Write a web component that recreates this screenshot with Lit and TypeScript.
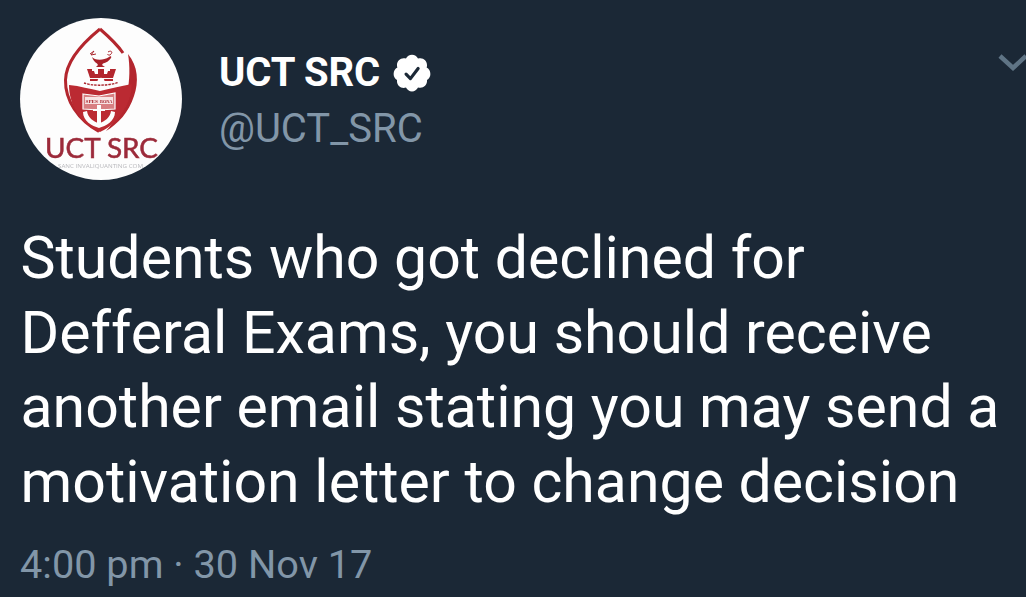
import { LitElement, html, css } from "lit";
import { customElement } from "lit/decorators.js";

@customElement("app-root")
export class AppRoot extends LitElement {
  static styles = css`
    :host {
      display: block;
      width: 1026px;
      height: 597px;
      overflow: hidden;
      background: #1b2836;
      font-family: Roboto, "Liberation Sans", sans-serif;
      color: #fff;
    }
    .tweet {
      display: flex;
      flex-direction: column;
      padding: 18px 0 0 20px;
    }
    .head {
      display: flex;
      align-items: flex-start;
    }
    .avatar {
      width: 162px;
      height: 162px;
      flex: none;
      display: block;
    }
    .who {
      margin-left: 37px;
      padding-top: 30px;
      flex: 1;
    }
    .name-row {
      display: flex;
      align-items: center;
      height: 50px;
    }
    .name {
      font-size: 40px;
      font-weight: 700;
      line-height: 50px;
      letter-spacing: -0.15px;
    }
    .badge {
      width: 42px;
      height: 42px;
      margin-left: 11px;
      display: block;
    }
    .handle {
      font-size: 40px;
      line-height: 50px;
      color: #8296a8;
      margin-top: 6px;
    }
    .chev {
      width: 30px;
      height: 20px;
      margin: 35px -2px 0 0;
      flex: none;
      display: block;
    }
    .body {
      margin: 41px 0 0 0.5px;
      font-size: 59px;
      line-height: 74.5px;
      white-space: nowrap;
    }
    .meta {
      margin: 21px 0 0 0;
      font-size: 39.7px;
      line-height: 50px;
      color: #8296a8;
    }
    .logo-text {
      font-family: Lato, "Open Sans", sans-serif;
      font-weight: 400;
      font-size: 26px;
      fill: #9c2b3a;
      stroke: #9c2b3a;
      stroke-width: 0.5px;
    }
    .logo-small {
      font-family: "Open Sans", sans-serif;
      font-size: 5.5px;
      fill: #b9b9bd;
    }
    .logo-book {
      font-family: "Liberation Serif", serif;
      font-size: 5px;
      font-weight: 700;
      fill: #a9232c;
    }
  `;

  render() {
    return html`
      <div class="tweet">
        <div class="head">
          <svg class="avatar" viewBox="20 18 162 162">
            <defs>
              <filter id="soft"><feGaussianBlur stdDeviation="0.5"></feGaussianBlur></filter>
              <clipPath id="round"><circle cx="101" cy="99" r="81"></circle></clipPath>
            </defs>
            <g clip-path="url(#round)">
              <rect x="20" y="18" width="162" height="162" fill="#fdfdfd"></rect>
              <g filter="url(#soft)">
                <!-- mandorla outline -->
                <path d="M100 29 C84 42 66 60 65.500 80 C65 100 78 120 99 131.500" fill="none" stroke="#b3262d" stroke-width="3"></path>
                <path d="M100 29 C108 36 117 44 123 53" fill="none" stroke="#b3262d" stroke-width="3"></path>
                <!-- right crescent -->
                <path d="M128 54 C138 66 139 82 134 96 C129 112 118 124 106 131 C116 120 124 108 127 94 C130 80 130 66 128 54 Z" fill="#b3262d"></path>
                <!-- initials above the lamp -->
                <path d="M90 54 L94 51 L91 55 L96 54 M108 52 C111 50 113 52 111 54 C110 56 107 55 108 54" fill="none" stroke="#a9232c" stroke-width="1"></path>
                <!-- lamp -->
                <path d="M92 57 C94 60 103 61 109 57 C110 56 112 56 111 58 C109 61 106 63 103 63.500 L102 65 L105 67 L96 67 L98 65 L97 63.500 C95 62.500 93 60 92 57 Z" fill="#a9232c"></path>
                <!-- crown -->
                <path d="M87 69 L92 69 L92 71 L94 71 L95 74 L98 74 L98 69 L104 69 L104 74 L107 74 L108 71 L110 71 L110 69 L116 69 L113 78 L90 78 Z" fill="#b3262d"></path>
                <path d="M90 79 L113 79 L113 81 L90 81 Z" fill="#b3262d"></path>
                <path d="M97.500 81 C97.500 76.500 104.500 76.500 104.500 81 Z" fill="#fdfdfd"></path>
                <!-- scroll band -->
                <path d="M84 83 C92 86 108 86 118 82.500" fill="none" stroke="#a9232c" stroke-width="1.400" stroke-dasharray="2.500 1"></path>
                <!-- shield -->
                <path d="M69 85 C80 86 90 89 100 91 C110 89 120 86 132 84 C132 100 122 122 100 132 C80 124 69 104 69 85 Z" fill="#bb2930"></path>
                <!-- book -->
                <path d="M83 94 L99 96 L115 93 L115 109 L99 110 L83 109 Z" fill="#d87f82" stroke="#fdfdfd" stroke-width="1.200"></path>
                <rect x="85" y="97" width="28" height="7" fill="#f7e4e4"></rect>
                <text class="logo-book" x="85.500" y="102.500" textLength="12.500" lengthAdjust="spacingAndGlyphs">SPES</text>
                <text class="logo-book" x="100" y="102.500" textLength="12.500" lengthAdjust="spacingAndGlyphs">BONA</text>
                <!-- anchor -->
                <rect x="97" y="105" width="4" height="21" fill="#fdfdfd"></rect>
                <rect x="93" y="109" width="12" height="2" fill="#fdfdfd"></rect>
                <path d="M83 112 L87 111 C88 118 93 121 99 123.500 C105 121 110 118 111 111 L115 112 C115 121 106 126 99 128 C92 126 83 121 83 112 Z" fill="#fdfdfd"></path>
                <text class="logo-text" x="45" y="158" textLength="113" lengthAdjust="spacingAndGlyphs">UCT SRC</text>
                <text class="logo-small" x="58" y="168" textLength="85" lengthAdjust="spacingAndGlyphs">SANC INVALIQUANTING COM</text>
              </g>
            </g>
          </svg>
          <div class="who">
            <div class="name-row">
              <span class="name">UCT SRC</span>
              <svg class="badge" viewBox="0 0 24 24">
                <path fill="#fff" d="M22.500 12.500c0-1.580-.875-2.950-2.148-3.600.154-.435.238-.905.238-1.400 0-2.210-1.710-3.998-3.818-3.998-.47 0-.92.084-1.336.25C14.818 2.415 13.510 1.500 12 1.500s-2.816.917-3.437 2.250c-.415-.165-.866-.25-1.336-.25-2.110 0-3.818 1.790-3.818 4 0 .494.083.964.237 1.400-1.272.65-2.147 2.018-2.147 3.600 0 1.495.782 2.798 1.942 3.486-.02.17-.032.34-.032.514 0 2.210 1.708 4 3.818 4 .47 0 .92-.086 1.335-.25.620 1.334 1.926 2.250 3.437 2.250 1.512 0 2.818-.916 3.437-2.250.415.163.865.248 1.336.248 2.110 0 3.818-1.790 3.818-4 0-.174-.012-.344-.033-.513 1.158-.687 1.943-1.990 1.943-3.484z"></path>
                <path fill="none" stroke="#1b2836" stroke-width="1.800" stroke-linecap="round" stroke-linejoin="round" d="M8.600 12.700l2.500 2.500 4.400-5.800"></path>
              </svg>
            </div>
            <div class="handle">@UCT_SRC</div>
          </div>
          <svg class="chev" viewBox="0 0 30 20">
            <path d="M2 3 L15 15 L28 3" fill="none" stroke="#5f7485" stroke-width="4.500"></path>
          </svg>
        </div>
        <div class="body">
          Students who got declined for<br />
          Defferal Exams, you should receive<br />
          another email stating you may send a<br />
          motivation letter to change decision
        </div>
        <div class="meta">4:00 pm · 30 Nov 17</div>
      </div>
    `;
  }
}
